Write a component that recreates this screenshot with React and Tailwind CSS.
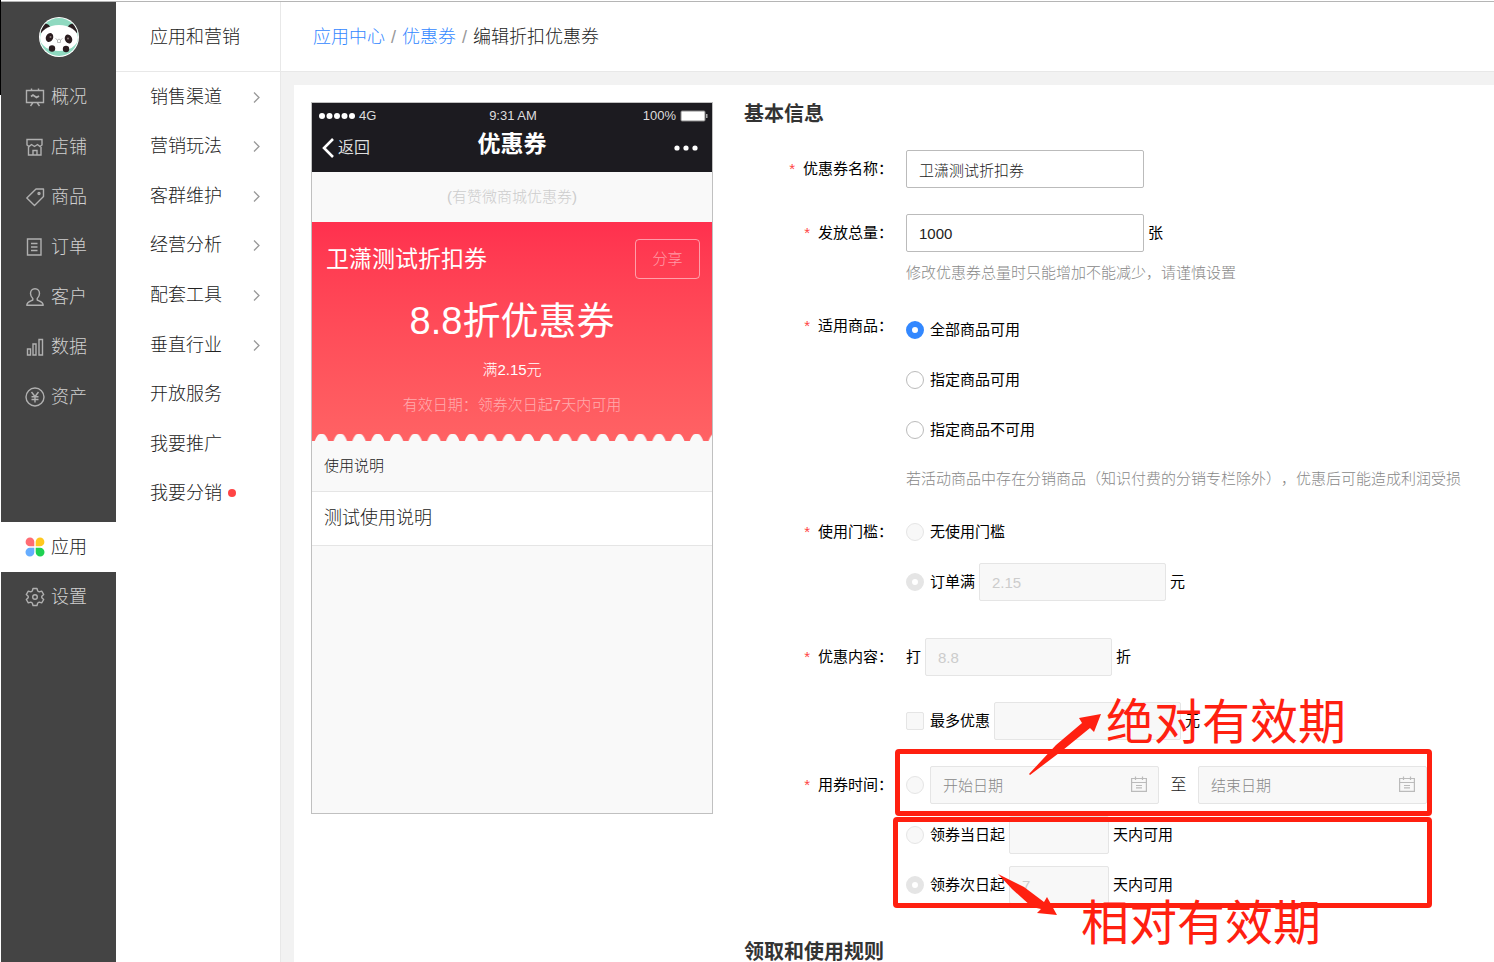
import { useState } from "react";
import clsx from "clsx";

const NAV_ITEMS = [
    { key: "overview", label: "概况" },
    { key: "shop", label: "店铺" },
    { key: "goods", label: "商品" },
    { key: "order", label: "订单" },
    { key: "customer", label: "客户" },
    { key: "data", label: "数据" },
    { key: "asset", label: "资产" },
];

const SUB_ITEMS = [
    { label: "销售渠道", arrow: true },
    { label: "营销玩法", arrow: true },
    { label: "客群维护", arrow: true },
    { label: "经营分析", arrow: true },
    { label: "配套工具", arrow: true },
    { label: "垂直行业", arrow: true },
    { label: "开放服务" },
    { label: "我要推广" },
    { label: "我要分销", dot: true },
];

const NAV_SHAPES = {
    overview: (
        <>
            <path d="M1.500 3.500h17v12h-17zM6.500 1.500v2M13.500 1.500v2M8 15.500l-2.500 3.500M12 15.500l2.500 3.500" />
            <path d="M6 9.500l2-1.500 3.500 2.500 2.500-1.500" strokeWidth="1.800" />
        </>
    ),
    shop: (
        <>
            <path d="M2 2.500h15v5.500l-2 1.500-2.500-2-3 2-3-2L4 9.500 2 8z" />
            <path d="M3.500 10v8h12.500v-8M8 18v-4.500h4V18" />
        </>
    ),
    goods: (
        <>
            <path d="M11 2h7.500v7.500L9.500 18.500 1.800 11z" strokeLinejoin="round" />
            <circle cx="14" cy="6.500" r="1" />
        </>
    ),
    order: (
        <>
            <path d="M2.500 2h13.500v16H2.500z" />
            <path d="M6 6.500h6.500M6 10h6.500M6 13.500h6.500" />
        </>
    ),
    customer: (
        <path
            d="M10 1.800c-3 0-4.500 2-4.500 4.700 0 2.200 1 3.800 2.300 5v1.500c-2 1-6 1.800-6 5.200h16.400c0-3.400-4-4.200-6-5.200v-1.500c1.300-1.200 2.300-2.800 2.300-5 0-2.700-1.500-4.700-4.500-4.700z"
            strokeLinejoin="round"
        />
    ),
    data: <path d="M2.500 12h3v6h-3zM8 7h3v11H8zM14 2.500h3.500V18H14z" />,
    asset: (
        <>
            <circle cx="10" cy="10" r="9" />
            <path d="M6.500 5l3.500 4.500L13.500 5M6.500 9.800h7M6.500 12.500h7M10 9.500v6" />
        </>
    ),
    setting: (
        <>
            <path
                d="M8 1.500h4l.7 2.500 1.500.8 2.500-.700 2 3.400-1.900 1.700v1.600l1.900 1.700-2 3.400-2.500-.700-1.500.8-.700 2.500H8l-.7-2.500-1.500-.8-2.500.7-2-3.400 1.900-1.700V9.200L1.300 7.500l2-3.400 2.500.7 1.500-.8z"
                strokeLinejoin="round"
            />
            <circle cx="10" cy="10" r="2.300" />
        </>
    ),
};

function NavIcon({ name }) {
    if (name === "app") {
        return (
            <svg viewBox="0 0 20 20" className="size-5 shrink-0" aria-hidden="true">
                <path d="M5 .5a4.300 4.300 0 0 1 4.300 4.300v4.500H5A4.400 4.400 0 0 1 5 .5z" fill="#ff6c73" />
                <path d="M15 .5a4.400 4.400 0 0 1 0 8.800h-4.300V4.800A4.300 4.300 0 0 1 15 .5z" fill="#ffc81f" />
                <path d="M5 10.700h4.300v4.500A4.400 4.400 0 1 1 5 10.700z" fill="#66adff" />
                <path d="M10.700 10.700H15a4.400 4.400 0 1 1-4.300 4.500z" fill="#1fd152" />
            </svg>
        );
    }
    return (
        <svg
            viewBox="0 0 20 20"
            className="size-5 shrink-0"
            fill="none"
            stroke="#b0b0b0"
            strokeWidth="1.400"
            aria-hidden="true"
        >
            {NAV_SHAPES[name]}
        </svg>
    );
}

function NavLink({ name, label, active }) {
    return (
        <a
            href={`#${name}`}
            className={clsx(
                "flex h-[50px] items-center gap-1.5 pl-6 text-lg",
                active ? "bg-white text-[#222]" : "text-[#d0d0d0]"
            )}
        >
            <NavIcon name={name} />
            {label}
        </a>
    );
}

/** Panda avatar of the shop */
function Logo() {
    return (
        <svg viewBox="0 0 40 40" className="size-10" role="img" aria-label="店铺头像">
            <clipPath id="logo-clip">
                <circle cx="20" cy="20" r="19" />
            </clipPath>
            <circle cx="20" cy="20" r="20" fill="#fff" />
            <g clipPath="url(#logo-clip)">
                <rect width="40" height="40" fill="#8fd9c0" />
                <circle cx="6" cy="12" r="5.500" fill="#2b1d20" />
                <circle cx="34" cy="12" r="5.500" fill="#2b1d20" />
                <ellipse cx="20" cy="21" rx="19" ry="13" fill="#fff" />
                <ellipse cx="10.500" cy="20.500" rx="3.600" ry="4.600" transform="rotate(25 10.500 20.500)" fill="#2b1d20" />
                <ellipse cx="29.500" cy="22" rx="3.600" ry="4.600" transform="rotate(-25 29.500 22)" fill="#2b1d20" />
                <circle cx="11.500" cy="20" r="1" fill="#8a7a7a" />
                <circle cx="29" cy="21.500" r="1" fill="#8a7a7a" />
                <path d="M16.500 21.500l2 1.500 1.500-1 1.500 1 2-1.500M18.500 23v2.500h3V23" fill="none" stroke="#aaa" strokeWidth=".8" />
                <circle cx="13" cy="31.500" r="3.200" fill="#2b1d20" />
                <circle cx="27" cy="32" r="3.200" fill="#2b1d20" />
            </g>
        </svg>
    );
}

function Sidebar() {
    return (
        <nav className="w-[115px] shrink-0 bg-[#444]">
            <div className="flex h-[70px] items-center justify-center">
                <Logo />
            </div>
            {NAV_ITEMS.map((item) => (
                <NavLink key={item.key} name={item.key} label={item.label} />
            ))}
            <div className="mt-[100px]">
                <NavLink name="app" label="应用" active />
                <NavLink name="setting" label="设置" />
            </div>
        </nav>
    );
}

function SubMenu() {
    return (
        <nav className="w-[165px] shrink-0 border-r border-[#e8e8e8] text-lg text-[#222]">
            <h2 className="flex h-[70px] items-center border-b border-[#e8e8e8] pl-[34px]">应用和营销</h2>
            <ul className="grid h-[446px] grid-rows-9">
                {SUB_ITEMS.map((item) => (
                    <li key={item.label} className="flex">
                        <a href="#sub" className="flex flex-1 items-center pl-[34px] pr-[18px]">
                            {item.label}
                            {item.dot && <span className="ml-1.5 size-2 rounded-full bg-[#f44]" />}
                            {item.arrow && (
                                <svg viewBox="0 0 10 12" className="ml-auto h-3 w-2.5" fill="none" stroke="#999" strokeWidth="1.300">
                                    <path d="M2 1.500l5 5-5 5" />
                                </svg>
                            )}
                        </a>
                    </li>
                ))}
            </ul>
        </nav>
    );
}

function PhonePreview() {
    return (
        <section className="h-[712px] w-[402px] shrink-0 border border-[#c0c0c0] bg-[#f9f9f9]">
            <header className="h-[69px] bg-[#1c1b20] text-white">
                <div className="grid h-[26px] grid-cols-3 items-center pl-1.5 pr-1 text-[13px] text-[#ddd]">
                    <div className="flex items-center gap-1">
                        <svg viewBox="0 0 37 8" className="h-2 w-[37px]" fill="#fff">
                            <circle cx="4" cy="4" r="3" />
                            <circle cx="11.500" cy="4" r="3" />
                            <circle cx="19" cy="4" r="3" />
                            <circle cx="26.500" cy="4" r="3" />
                            <circle cx="34" cy="4" r="3" />
                        </svg>
                        4G
                    </div>
                    <div className="text-center">9:31 AM</div>
                    <div className="flex items-center justify-end gap-1">
                        100%
                        <svg viewBox="0 0 28 12" className="h-3 w-7">
                            <rect x="1" y="1" width="24" height="10" rx="1" fill="#fff" stroke="#888" />
                            <path d="M26 4h1.500v4H26z" fill="#aaa" />
                        </svg>
                    </div>
                </div>
                <div className="grid h-[38px] grid-cols-3 items-center px-2.5">
                    <a href="#back" className="flex items-center gap-1 text-base font-normal text-[#ddd]">
                        <svg viewBox="0 0 12 20" className="h-5 w-3" fill="none" stroke="#fff" strokeWidth="2.600">
                            <path d="M11 1L2 10l9 9" />
                        </svg>
                        返回
                    </a>
                    <h3 className="pb-2 text-center text-[23px] leading-7 font-bold">优惠券</h3>
                    <svg viewBox="0 0 24 6" className="mr-1 h-1.5 w-6 justify-self-end" fill="#fff">
                        <circle cx="3" cy="3" r="2.600" />
                        <circle cx="12" cy="3" r="2.600" />
                        <circle cx="21" cy="3" r="2.600" />
                    </svg>
                </div>
            </header>

            <p className="text-center text-[15px] leading-[50px] text-[#ccc]">(有赞微商城优惠券)</p>

            <div className="bg-linear-to-b from-[#ff304e] to-[#ff6264] text-center text-white">
                <div className="flex items-center justify-between pt-[17px] pr-3 pl-3.5">
                    <h4 className="text-[23px] leading-10 font-normal">卫潇测试折扣券</h4>
                    <button type="button" className="h-10 w-[65px] rounded border border-white/50 text-[15px] text-white/50">
                        分享
                    </button>
                </div>
                <p className="mt-5 text-[38px] leading-[44px] font-normal">8.8折优惠券</p>
                <p className="mt-[17px] text-[15px] leading-5">满2.15元</p>
                <p className="mt-[15px] text-[15px] leading-5 text-white/50">有效日期：领券次日起7天内可用</p>
                {/* perforated edge */}
                <svg className="mt-[18px] block h-2 w-full" aria-hidden="true">
                    <defs>
                        <pattern id="perforation" width="18.750" height="8" patternUnits="userSpaceOnUse">
                            <path d="M2.800 8C4 4.500 6 1 8 1h3c2 0 4 3.500 5.200 7z" fill="#f9f9f9" />
                        </pattern>
                    </defs>
                    <rect width="100%" height="8" fill="url(#perforation)" />
                </svg>
            </div>

            <p className="border-b border-[#e5e5e5] px-3 text-[15px] leading-[50px] text-[#222]">使用说明</p>
            <p className="border-b border-[#e5e5e5] bg-white px-3 text-lg leading-[53px] text-[#222]">测试使用说明</p>
        </section>
    );
}

function TextInput({ className, ...props }) {
    return (
        <input
            type="text"
            className={clsx(
                "h-[38px] rounded-xs border border-[#bbb] bg-white px-3 text-[15px] font-light text-[#222] outline-none",
                "placeholder:text-[#888] disabled:border-[#e5e5e5] disabled:bg-[#f8f8f8] disabled:text-[#ccc]",
                className
            )}
            {...props}
        />
    );
}

function Radio({ id, className, ...props }) {
    return (
        <input
            id={id}
            type="radio"
            className={clsx(
                "mr-0.5 size-[18px] shrink-0 appearance-none rounded-full border border-[#bbb] bg-white",
                "checked:border-[6px] checked:border-[#38f]",
                "disabled:border-[#e5e5e5] disabled:bg-[#f8f8f8] disabled:checked:border-[#e5e5e5] disabled:checked:bg-white",
                className
            )}
            {...props}
        />
    );
}

function Field({ label, htmlFor, className, children }) {
    return (
        <div className={clsx("flex items-start", className)}>
            <label htmlFor={htmlFor} className="mr-[13px] w-[149px] shrink-0 text-right leading-[38px]">
                <span className="mr-2 text-[#f44]">*</span>
                {label}：
            </label>
            <div className="min-w-0 flex-1">{children}</div>
        </div>
    );
}

function Line({ children }) {
    return <div className="flex h-[38px] items-center gap-1">{children}</div>;
}

function DateInput({ id, label, name }) {
    return (
        <div className="relative w-[229px]">
            <TextInput id={id} name={name} disabled aria-label={label} placeholder={label} className="w-full" />
            <svg
                viewBox="0 0 16 16"
                className="absolute top-2.5 right-3 size-4"
                fill="none"
                stroke="#bbb"
                strokeWidth="1.200"
            >
                <path d="M.6 2.500h14.800v12.900H.6zM.6 6.500h14.800M4.500 .5v3.500M11.500 .5v3.500M5 9.500h6M5 11.800h6" />
            </svg>
        </div>
    );
}

/** Red marks explaining the two kinds of validity period */
function Annotations() {
    return (
        <div className="pointer-events-none absolute inset-0 text-5xl whitespace-nowrap text-[#ff2010]">
            <div className="absolute -top-[17px] -left-[11px] h-[67px] w-[537px] rounded-sm border-5 border-current" />
            <div className="absolute top-[51px] -left-[13px] h-[91px] w-[539px] rounded-sm border-5 border-current" />
            <svg viewBox="0 0 73 63" className="absolute -top-[53px] left-[123px] h-[63px] w-[73px]" fill="currentColor">
                <path d="M0 61L27 32 53 10 50 5 72 1 65 19 61 15 34 37 1 62z" />
            </svg>
            <svg viewBox="0 0 60 42" className="absolute top-[108px] left-[92px] h-[42px] w-[60px]" fill="currentColor">
                <path d="M0 0L26 13 46 28 49 23 59 41 39 39 43 35 34 33 14 15z" />
            </svg>
            <span className="absolute -top-[67px] left-[200px] leading-none">绝对有效期</span>
            <span className="absolute top-[134px] left-[175px] leading-none">相对有效期</span>
        </div>
    );
}

function CouponForm() {
    const [name, setName] = useState("卫潇测试折扣券");
    const [total, setTotal] = useState("1000");
    const [scope, setScope] = useState("all");

    const scopes = [
        { value: "all", label: "全部商品可用" },
        { value: "include", label: "指定商品可用" },
        { value: "exclude", label: "指定商品不可用" },
    ];

    return (
        <form className="min-w-0 flex-1 pt-0.5 text-[15px] font-normal text-black">
            <h2 className="text-xl leading-5 font-bold text-[#333]">基本信息</h2>

            <Field label="优惠券名称" htmlFor="name" className="mt-[26px]">
                <TextInput id="name" value={name} onChange={(e) => setName(e.target.value)} className="w-[238px]" />
            </Field>

            <Field label="发放总量" htmlFor="total" className="mt-[26px]">
                <Line>
                    <TextInput id="total" value={total} onChange={(e) => setTotal(e.target.value)} className="w-[238px]" />
                    <span>张</span>
                </Line>
                <p className="mt-[11px] leading-5 font-light text-[#888]">修改优惠券总量时只能增加不能减少，请谨慎设置</p>
            </Field>

            <Field label="适用商品" htmlFor="scope-all" className="mt-6">
                <div className="flex flex-col gap-3 pt-1">
                    {scopes.map((item) => (
                        <Line key={item.value}>
                            <Radio
                                id={`scope-${item.value}`}
                                name="scope"
                                checked={scope === item.value}
                                onChange={() => setScope(item.value)}
                            />
                            <label htmlFor={`scope-${item.value}`}>{item.label}</label>
                        </Line>
                    ))}
                </div>
                <p className="mt-5 leading-5 font-light text-[#888] [text-spacing-trim:space-all]">
                    若活动商品中存在分销商品（知识付费的分销专栏除外），优惠后可能造成利润受损
                </p>
            </Field>

            <Field label="使用门槛" htmlFor="limit-none" className="mt-6">
                <div className="flex flex-col gap-3">
                    <Line>
                        <Radio id="limit-none" name="limit" disabled />
                        <label htmlFor="limit-none">无使用门槛</label>
                    </Line>
                    <Line>
                        <Radio id="limit-full" name="limit" disabled defaultChecked />
                        <label htmlFor="limit-full">订单满</label>
                        <TextInput aria-label="订单满金额" defaultValue="2.15" disabled className="w-[187px]" />
                        <span>元</span>
                    </Line>
                </div>
            </Field>

            <Field label="优惠内容" htmlFor="discount" className="mt-[37px]">
                <div className="flex flex-col gap-[26px]">
                    <Line>
                        <span>打</span>
                        <TextInput id="discount" defaultValue="8.8" disabled className="w-[187px]" />
                        <span>折</span>
                    </Line>
                    <Line>
                        <input
                            id="max"
                            type="checkbox"
                            disabled
                            className="mr-0.5 size-[18px] appearance-none rounded-xs border border-[#e5e5e5] bg-[#f8f8f8]"
                        />
                        <label htmlFor="max">最多优惠</label>
                        <TextInput aria-label="最多优惠金额" disabled className="w-[187px]" />
                        <span>元</span>
                    </Line>
                </div>
            </Field>

            <Field label="用券时间" htmlFor="time-range" className="mt-[26px]">
                <div className="relative flex flex-col gap-3">
                    <Line>
                        <Radio id="time-range" name="time" aria-label="固定日期" disabled />
                        <DateInput id="start" name="start" label="开始日期" />
                        <span className="w-[31px] text-center text-base font-light text-[#222]">至</span>
                        <DateInput id="end" name="end" label="结束日期" />
                    </Line>
                    <Line>
                        <Radio id="time-today" name="time" disabled />
                        <label htmlFor="time-today">领券当日起</label>
                        <TextInput aria-label="当日起天数" disabled className="w-[100px]" />
                        <span>天内可用</span>
                    </Line>
                    <Line>
                        <Radio id="time-next" name="time" disabled defaultChecked />
                        <label htmlFor="time-next">领券次日起</label>
                        <TextInput aria-label="次日起天数" defaultValue="7" disabled className="w-[100px]" />
                        <span>天内可用</span>
                    </Line>
                    <Annotations />
                </div>
            </Field>

            <h2 className="mt-[38px] text-xl leading-5 font-bold text-[#333]">领取和使用规则</h2>
        </form>
    );
}

export default function App() {
    return (
        <div className="relative flex min-h-screen flex-col bg-white pt-px pl-px font-['Liberation_Sans','Noto_Sans_CJK_SC',sans-serif] font-light">
            <div className="absolute top-0 left-0 h-[95px] w-px bg-black" />
            <div className="flex flex-1 border-t border-[#b5b5b5]">
                <Sidebar />
                <SubMenu />
                <div className="flex min-w-0 flex-1 flex-col bg-[#f2f2f2]">
                    <header className="h-[70px] border-b border-[#e8e8e8] bg-white pl-8">
                        <nav className="flex h-full items-center gap-1.5 text-lg text-[#222]">
                            <a href="#apps" className="text-[#38f]">应用中心</a>
                            <span className="text-[#999]">/</span>
                            <a href="#coupons" className="text-[#38f]">优惠券</a>
                            <span className="text-[#999]">/</span>
                            <span>编辑折扣优惠券</span>
                        </nav>
                    </header>
                    <main className="mt-[13px] ml-[13px] flex flex-1 items-start gap-[31px] bg-white pt-[17px] pl-[17px]">
                        <PhonePreview />
                        <CouponForm />
                    </main>
                </div>
            </div>
        </div>
    );
}
